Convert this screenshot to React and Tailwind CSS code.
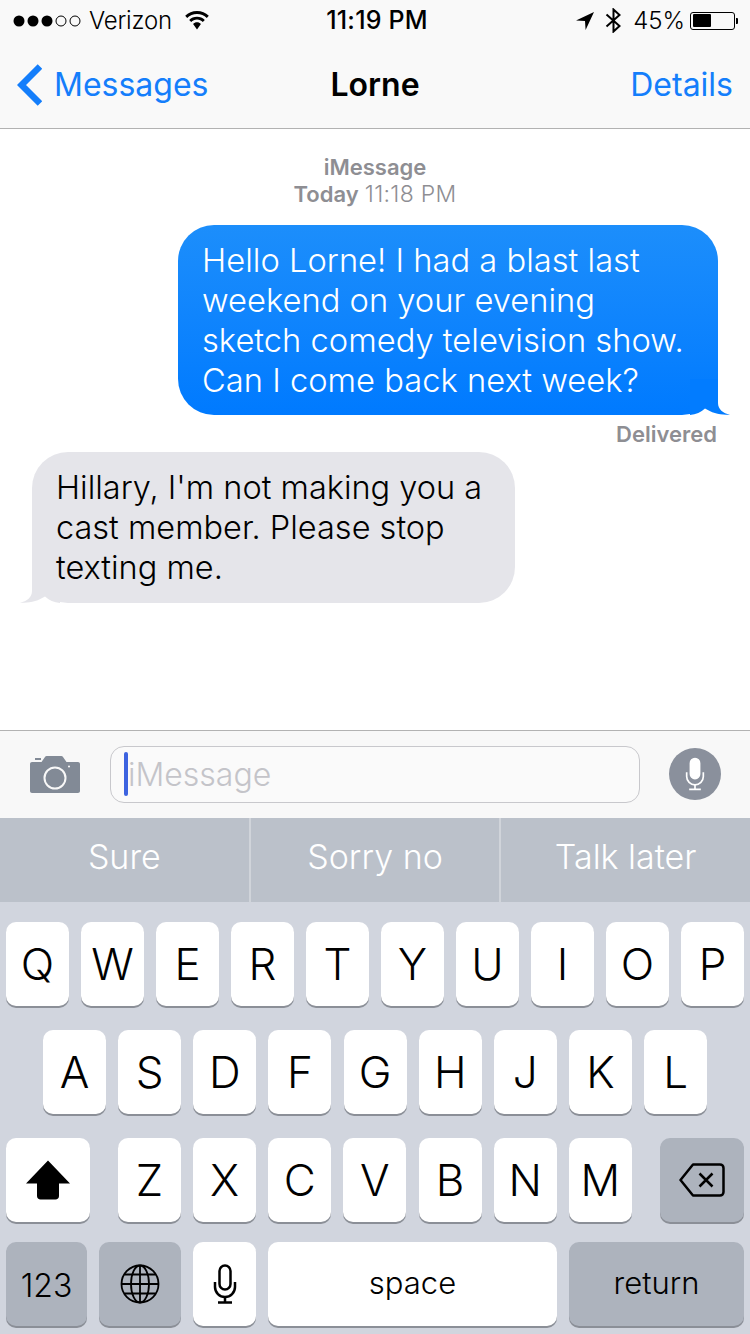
import { Fragment } from 'react'

const rowOne = ['Q', 'W', 'E', 'R', 'T', 'Y', 'U', 'I', 'O', 'P']
const rowTwo = ['A', 'S', 'D', 'F', 'G', 'H', 'J', 'K', 'L']
const rowThree = ['Z', 'X', 'C', 'V', 'B', 'N', 'M']

function Key({ children, dark, className = '' }) {
  const tone = dark ? 'bg-[#adb3bd]' : 'bg-white'
  return (
    <div className={`h-[84px] rounded-[10px] shadow-[0_2px_0_#8b8f97] flex items-center justify-center text-black ${tone} ${className}`}>
      {children}
    </div>
  )
}

function LetterRow({ letters }) {
  return letters.map((l) => (
    <Key key={l} className="w-[63px] text-[44px] font-light">{l}</Key>
  ))
}

function MicGlyph({ color, width, height, strokeWidth, solid }) {
  return (
    <svg width={width} height={height} viewBox="0 0 24 40" fill="none" stroke={color} strokeWidth={strokeWidth} strokeLinecap="butt">
      <rect x="6.5" y="1.5" width="11" height="24" rx="5.5" fill={solid ? color : 'none'} />
      <path d="M2 18v5a10 10 0 0 0 20 0v-5" />
      <path d="M12 33v5M5 38.5h14" />
    </svg>
  )
}

function StatusBar() {
  return (
    <div className="h-10 pt-[1px] flex items-center justify-between text-black text-[24px] relative">
      <div className="flex items-center pl-[13px]">
        <svg width="68" height="12" viewBox="0 0 68 12">
          <circle cx="6" cy="6" r="5.5" fill="#000" />
          <circle cx="20" cy="6" r="5.5" fill="#000" />
          <circle cx="34" cy="6" r="5.5" fill="#000" />
          <circle cx="48" cy="6" r="5" fill="none" stroke="#000" strokeWidth="1" />
          <circle cx="62" cy="6" r="5" fill="none" stroke="#000" strokeWidth="1" />
        </svg>
        <span className="ml-[8px] font-light tracking-[-0.2px]">Verizon</span>
        <svg className="ml-[13px]" width="24" height="19" viewBox="0 0 24 19" fill="#000">
          <path d="M12 0C7.4 0 3.3 1.8.2 4.8l2 2.1C4.8 4.4 8.2 2.9 12 2.9s7.200 1.500 9.800 4l2-2.100C20.700 1.800 16.600 0 12 0z" />
          <path d="M12 5.700c-3 0-5.800 1.200-7.800 3.200l2 2.100c1.500-1.500 3.500-2.400 5.800-2.400s4.300.9 5.800 2.400l2-2.100c-2-2-4.800-3.200-7.800-3.200z" />
          <path d="M12 11.300c-1.500 0-2.900.6-3.900 1.600L12 18.500l3.900-5.600c-1-1-2.400-1.600-3.900-1.600z" />
        </svg>
      </div>
      <div className="absolute left-[4px] right-0 top-0 h-10 pt-[1px] flex items-center justify-center font-medium text-[25px] tracking-[0.2px]">11:19 PM</div>
      <div className="flex items-center pr-[12px]">
        <svg width="18" height="18" viewBox="0 0 18 18" fill="#000">
          <path d="M18 0L0 8.500l9 .6.600 8.900z" />
        </svg>
        <svg className="ml-[11px]" width="17" height="25" viewBox="0 0 17 25" fill="none" stroke="#000" strokeWidth="2">
          <path d="M1.500 6.500l13 11.500-6 5.500V1.500l6 5.500-13 11.500" />
        </svg>
        <span className="ml-[11px] font-light">45%</span>
        <div className="ml-[5px] w-[45px] h-[18px] border border-black rounded-[3px] p-[1.500px] flex">
          <div className="w-[18px] h-full bg-black rounded-[1px]" />
        </div>
        <div className="ml-[1px] w-[2px] h-[6px] bg-black rounded-r-[1px]" />
      </div>
    </div>
  )
}

function NavBar() {
  return (
    <div className="h-[88px] grid grid-cols-3 items-center text-[32px] pt-[1px]">
      <div className="flex items-center pl-[17px] text-[#147efb]">
        <svg width="25" height="42" viewBox="0 0 25 42" fill="none" stroke="#147efb" strokeWidth="6.500">
          <path d="M23 2.500L4.500 21 23 39.500" />
        </svg>
        <span className="ml-[12px]">Messages</span>
      </div>
      <div className="text-center font-semibold text-black">Lorne</div>
      <div className="text-right pr-[17px] text-[#147efb]">Details</div>
    </div>
  )
}

function Thread() {
  return (
    <div className="h-[601px] bg-white flex flex-col">
      <div className="pt-[25px] text-center text-[22px] leading-[26px] text-[#8e8e93]">
        <div className="font-semibold">iMessage</div>
        <div className="pt-[1px]"><span className="font-semibold">Today</span> <span className="font-light text-[23px] tracking-[0.3px]">11:18 PM</span></div>
      </div>
      <div className="mt-[18px] self-end mr-[32px] w-[540px] h-[190px] rounded-[36px] bg-gradient-to-b from-[#1c8efb] to-[#007aff] relative pl-[24px] pt-[15px] text-white text-[32.7px] leading-[40px] font-light">
        <svg className="absolute right-[-12px] bottom-0" width="40" height="36" viewBox="0 0 40 36" fill="#027cff">
          <path d="M28 0V24C28 30 33 34.500 40 35.500 31 36.500 22 34 15 29.500 11 33 6 35.500 0 36V0z" />
        </svg>
        <div className="relative">
          Hello Lorne! I had a blast last<br />
          weekend on your evening<br />
          sketch comedy television show.<br />
          Can I come back next week?
        </div>
      </div>
      <div className="mt-[6px] pr-[33px] text-right text-[22px] leading-[26px] font-semibold text-[#8e8e93]">Delivered</div>
      <div className="mt-[5px] ml-[32px] w-[483px] h-[151px] rounded-[36px] bg-[#e5e5ea] relative pl-[24px] pt-[16px] text-black text-[32.5px] leading-[40px] font-light">
        <svg className="absolute left-[-12px] bottom-0" width="40" height="36" viewBox="0 0 40 36" fill="#e5e5ea">
          <path d="M12 0V24C12 30 7 34.500 0 35.500 9 36.500 18 34 25 29.500 29 33 34 35.500 40 36V0z" />
        </svg>
        <div className="relative">
          Hillary, I'm not making you a<br />
          cast member. Please stop<br />
          texting me.
        </div>
      </div>
    </div>
  )
}

function InputBar() {
  return (
    <div className="h-[88px] bg-[#f8f8f8] border-t border-[#b2b2b2] flex items-center">
      <svg className="ml-[30px]" width="50" height="37" viewBox="0 0 50 37">
        <path fill="#828a96" fillRule="evenodd" d="M2 6h9.500l3.500-5c.3-.6 1-1 1.700-1h14.600c.7 0 1.400.4 1.700 1l3.500 5H48c1.100 0 2 .9 2 2v27c0 1.100-.9 2-2 2H2c-1.100 0-2-.9-2-2V8c0-1.100.9-2 2-2zm23 4.500a11.500 11.500 0 1 0 0 23 11.500 11.500 0 0 0 0-23zm0 2a9.500 9.500 0 1 1 0 19 9.500 9.500 0 0 1 0-19z" />
        <rect x="5" y="2" width="6" height="2" fill="#828a96" />
        <circle cx="39" cy="10.500" r="1" fill="#fff" />
      </svg>
      <div className="ml-[30px] w-[530px] h-[57px] rounded-[14px] border border-[#c8c8cc] bg-[#fafafa] flex items-center pl-[13px] mb-[1px]">
        <div className="w-[4px] h-[44px] rounded-[2px] bg-[#3d63e0]" />
        <span className="text-[32px] font-light text-[#c4c4c9] pt-[1px]">iMessage</span>
      </div>
      <div className="ml-[29px] w-[52px] h-[52px] mb-[1px] rounded-full bg-[#8a909c] flex items-center justify-center">
        <MicGlyph color="#fff" width={20} height={36} strokeWidth={2} solid />
      </div>
    </div>
  )
}

function Suggestions() {
  const items = ['Sure', 'Sorry no', 'Talk later']
  return (
    <div className="h-[84px] bg-[#bbc1ca] flex text-[34px] font-light text-white">
      {items.map((t, i) => (
        <Fragment key={t}>
          {i > 0 && <div className="w-[2px] bg-[#d0d4da]" />}
          <div className="flex-1 flex items-center justify-center pb-[8px]">{t}</div>
        </Fragment>
      ))}
    </div>
  )
}

function Keyboard() {
  return (
    <div className="h-[432px] bg-[#d1d5de] pt-[20px] flex flex-col">
      <div className="flex gap-3 pl-[6px]">
        <LetterRow letters={rowOne} />
      </div>
      <div className="flex gap-[12.15px] pl-[43px] mt-[24px]">
        <LetterRow letters={rowTwo} />
      </div>
      <div className="flex pl-[6px] mt-[24px]">
        <Key className="w-[84px]">
          <svg width="44" height="40" viewBox="0 0 44 40" fill="#000">
            <path d="M22 .5L44 23.500H33V36c0 2-1.500 3.500-3.500 3.500h-15C12.500 39.500 11 38 11 36V23.500H0z" />
          </svg>
        </Key>
        <div className="flex gap-[12.15px] ml-[28px]">
          <LetterRow letters={rowThree} />
        </div>
        <Key dark className="w-[84px] ml-[28px]">
          <svg width="46" height="34" viewBox="0 0 46 34" fill="none" stroke="#000" strokeWidth="2.500" strokeLinejoin="round">
            <path d="M14 1.500h27c2 0 3.500 1.500 3.500 3.500v24c0 2-1.500 3.500-3.500 3.500H14L1.500 17z" />
            <path d="M20.500 10.500l13 13M33.500 10.500l-13 13" />
          </svg>
        </Key>
      </div>
      <div className="flex gap-3 pl-[6px] mt-[20px] text-[32px] font-light">
        <Key dark className="w-[81px] pt-[3px]">123</Key>
        <Key dark className="w-[82px]">
          <svg width="40" height="40" viewBox="0 0 40 40" fill="none" stroke="#000" strokeWidth="1.800">
            <circle cx="20" cy="20" r="18.500" />
            <ellipse cx="20" cy="20" rx="9" ry="18.500" />
            <path d="M20 1.500v37M1.500 20h37M4.500 10.500h31M4.500 29.500h31" />
          </svg>
        </Key>
        <Key className="w-[63px]">
          <MicGlyph color="#000" width={24} height={40} strokeWidth={2.500} />
        </Key>
        <Key className="w-[289px] text-[31px] pb-[2px]">space</Key>
        <Key dark className="w-[175px] text-[31px] pb-[2px]">return</Key>
      </div>
    </div>
  )
}

export default function App() {
  return (
    <div className="w-[750px] h-[1334px] overflow-hidden bg-white font-['Inter','Liberation_Sans',sans-serif]">
      <div className="bg-[#f9f9f9] border-b border-[#b2b2b2] h-[129px]">
        <StatusBar />
        <NavBar />
      </div>
      <Thread />
      <InputBar />
      <Suggestions />
      <Keyboard />
    </div>
  )
}
